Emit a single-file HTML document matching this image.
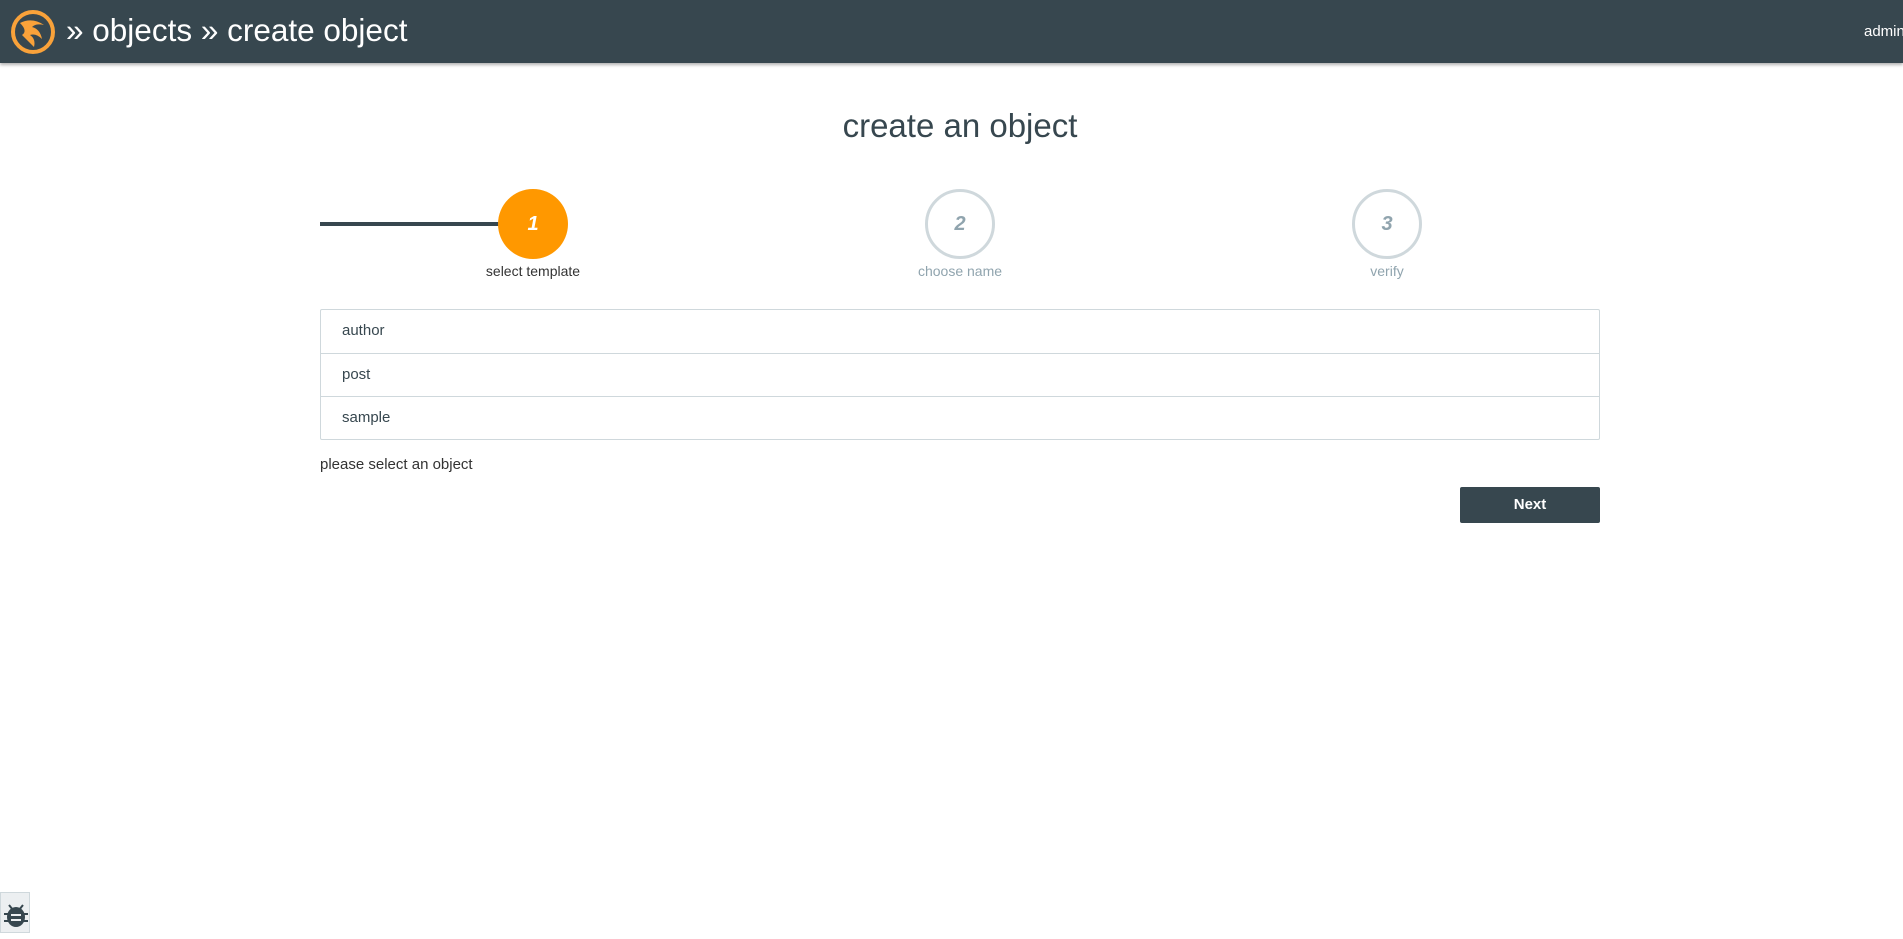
<!DOCTYPE html>
<html><head><meta charset="utf-8"><style>
*{margin:0;padding:0;box-sizing:border-box}
body{width:1903px;height:933px;background:#fff;font-family:"Liberation Sans",sans-serif;position:relative;overflow:hidden;color:#37474f}
.hdr{position:absolute;left:0;top:0;width:1903px;height:63px;background:#37474f;box-shadow:0 2px 3px rgba(0,0,0,.3)}
.crumb{position:absolute;left:66px;top:12px;color:#fff;font-size:31.5px;white-space:nowrap}
.admin{position:absolute;left:1864px;top:23px;color:#fff;font-size:15px}
h1{position:absolute;left:0;width:1920px;text-align:center;top:107px;font-weight:normal;font-size:33px;color:#37474f}
.line{position:absolute;left:320px;top:222px;width:180px;height:4px;background:#37474f}
.c{position:absolute;top:189px;width:70px;height:70px;border-radius:50%;text-align:center;line-height:70px;font-size:20px;font-style:italic;font-weight:bold}
.c1{left:498px;background:#ff9800;color:#fff}
.c2{left:925px;border:3px solid #cfd8dc;color:#90a4ae;line-height:64px}
.c3{left:1352px;border:3px solid #cfd8dc;color:#90a4ae;line-height:64px}
.lb{position:absolute;top:263px;width:200px;text-align:center;font-size:14px}
.list{position:absolute;left:320px;top:309px;width:1280px;border:1px solid #cfd8dc;border-radius:2px}
.row{height:43px;line-height:42px;padding-left:21px;font-size:15px;color:#37474f;border-top:1px solid #cfd8dc}
.row:first-child{border-top:none}
.msg{position:absolute;left:320px;top:456px;font-size:15px;color:#333}
.btn{position:absolute;left:1460px;top:487px;width:140px;height:36px;background:#37474f;color:#fff;font-size:15px;font-weight:bold;text-align:center;line-height:36px;border-radius:2px}
.bug{position:absolute;left:0;top:892px;width:30px;height:41px;background:#eceff1;border:1px solid #cfd8dc}
</style></head><body>
<div class="hdr">
<svg style="position:absolute;left:10px;top:9px" width="46" height="46" viewBox="0 0 46 46"><circle cx="23" cy="23" r="20" fill="none" stroke="#f9a23a" stroke-width="4"/><path d="M10 14 Q22 8 34 16 Q26 14 22 18 Q30 20 32 30 Q26 24 20 26 Q26 30 24 38 Q16 30 12 26 Q18 22 10 14Z" fill="#f9a23a"/></svg>
<div class="crumb">» objects » create object</div>
<div class="admin">admin</div>
</div>
<h1>create an object</h1>
<div class="line"></div>
<div class="c c1">1</div><div class="c c2">2</div><div class="c c3">3</div>
<div class="lb" style="left:433px;color:#333">select template</div>
<div class="lb" style="left:860px;color:#90a4ae">choose name</div>
<div class="lb" style="left:1287px;color:#90a4ae">verify</div>
<div class="list"><div class="row">author</div><div class="row">post</div><div class="row">sample</div></div>
<div class="msg">please select an object</div>
<div class="btn">Next</div>
<div class="bug"><svg width="30" height="41" viewBox="0 0 30 41"><ellipse cx="15" cy="24" rx="9" ry="10" fill="#37474f"/><path d="M8 12l4 5M22 12l-4 5M3 21h6M21 21h6M3 28h6M21 28h6" stroke="#37474f" stroke-width="2"/><path d="M10 22h10M10 27h10" stroke="#eceff1" stroke-width="2"/></svg></div>
</body></html>
